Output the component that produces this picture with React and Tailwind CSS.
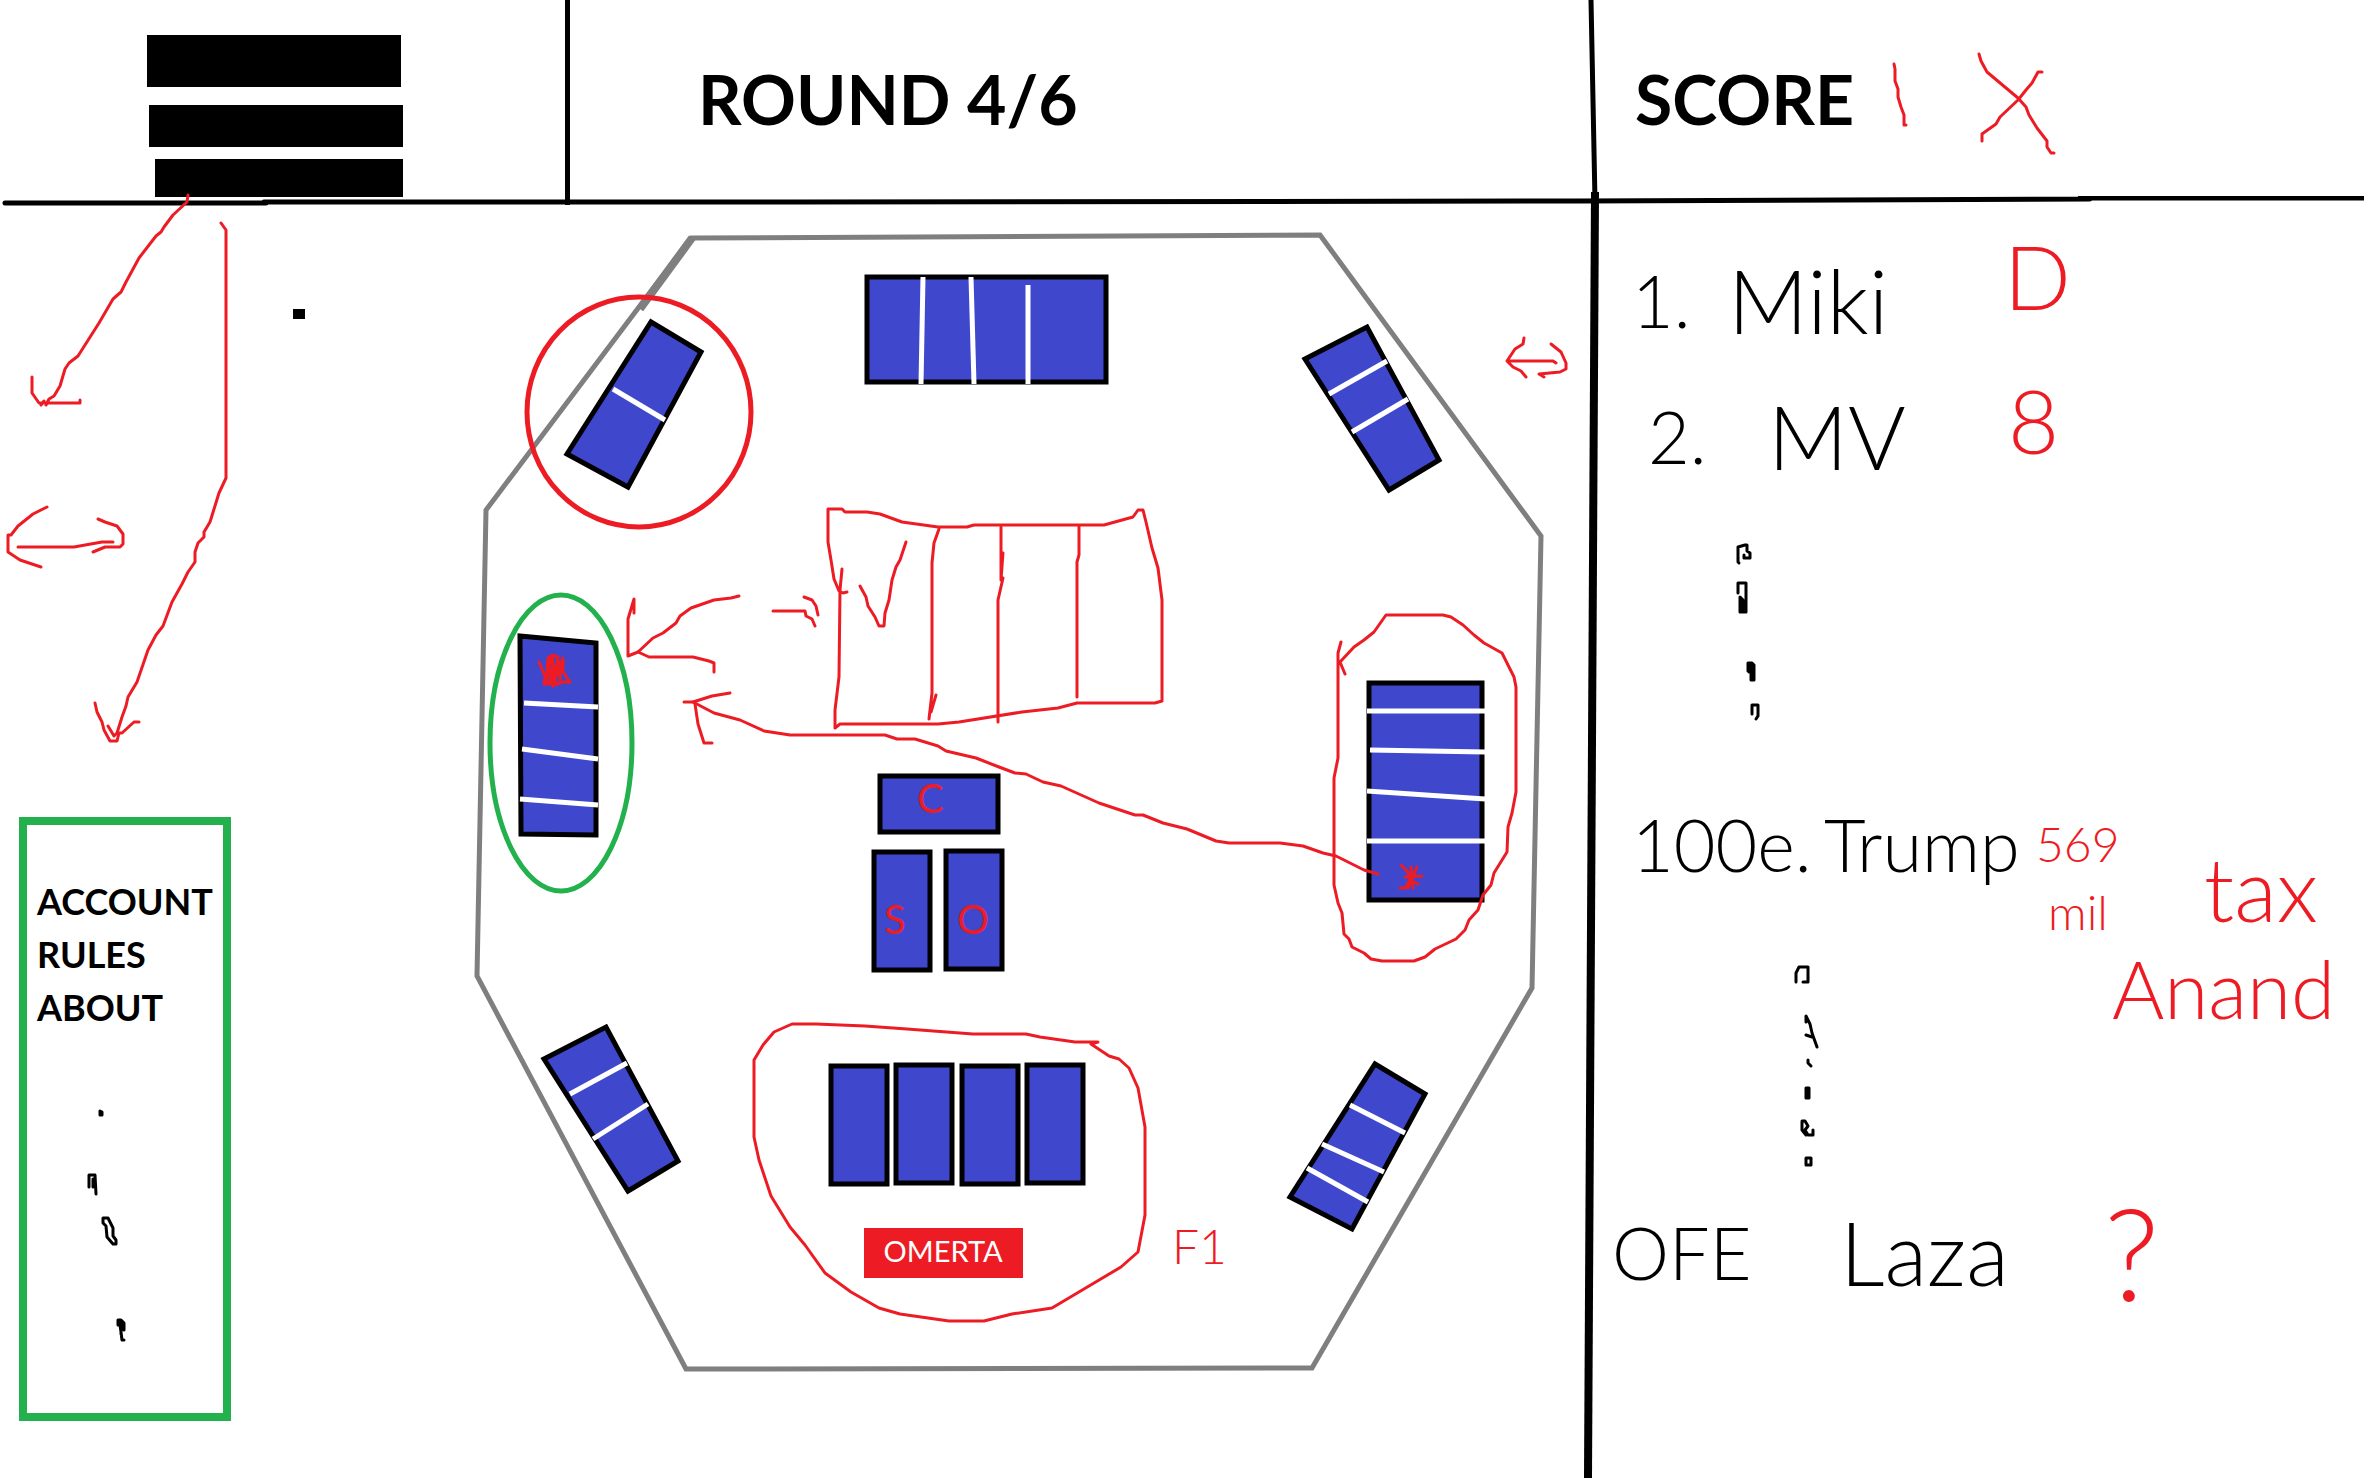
const RED = "#ed1c24";
const GREEN = "#22b14c";
const BLUE = "#3f48cc";
const GRAY = "#7f7f7f";

function Ink({ paths, color = RED, width = 3 }) {
  return (
    <g fill="none" stroke={color} strokeWidth={width} strokeLinecap="round" strokeLinejoin="round">
      {paths.map((d) => (
        <path key={d} d={d} />
      ))}
    </g>
  );
}

// Pointers that lead out of the menu and down the side column
const sideInk = [
  "M188 195L187 202L173 215L164 227L161 232L156 236L139 258L126 282L121 292L113 299L99 323L78 356L69 363L65 369L60 386L54 396L49 399L46 405",
  "M32 377V393L39 403H80V400M41 405L44 401",
  "M221 223L226 230V478L219 493L210 522L204 532V537L198 543L195 552V562L188 572L182 584L172 602L163 626L156 635L148 650L137 682L128 697L126 706L122 717L117 733L114 736L108 726",
  "M95 703L97 712L102 722L104 730L110 741H117L119 733L122 733L134 722H139",
  "M47 507L33 514L18 526L11 535H8V552L20 560L41 567",
  "M18 547H74L102 542H113",
  "M98 519L105 522L117 526L123 534V544L120 547H105L93 552",
];

const frameInk = "M691 238L1320 235L1541 536L1532 988L1312 1368L686 1369L477 976L486 510Z";

const tiltedCards = [
  "651,322 701,352 628,487 567,454",
  "1305,359 1367,327 1439,460 1389,490",
  "520,636 596,643 596,835 521,834",
  "544,1059 606,1027 678,1161 628,1191",
  "1375,1064 1425,1094 1352,1229 1290,1197",
];

const cards = [
  [865, 275, 243, 109],
  [1367, 681, 117, 221],
  [878, 774, 122, 60],
  [872, 850, 60, 122],
  [944, 849, 60, 122],
  [829, 1064, 60, 122],
  [894, 1063, 60, 122],
  [960, 1064, 60, 122],
  [1025, 1063, 60, 122],
];

const cardSplits = [
  "M613 389L665 420",
  "M923 277L921 384",
  "M971 277L974 384",
  "M1028 285V384",
  "M1329 394L1387 361",
  "M1352 432L1408 399",
  "M524 703L598 707",
  "M522 749L598 759",
  "M520 799L598 805",
  "M1367 711H1485",
  "M1370 750L1485 752",
  "M1367 791L1485 799",
  "M1367 841H1485",
  "M570 1094L627 1063",
  "M593 1139L648 1104",
  "M1350 1105L1405 1133",
  "M1322 1144L1384 1172",
  "M1307 1168L1368 1202",
];

const boardInk = [
  // loop round the player's own hand
  "M792 1024H816L865 1026L907 1029L973 1034H1026L1040 1037L1075 1042H1098L1091 1044L1109 1056L1119 1059L1129 1068L1138 1088L1145 1127V1215L1138 1252L1121 1267L1089 1286L1052 1308L1012 1314L984 1321H949L900 1314L879 1308L851 1292L825 1273L805 1245L790 1227L771 1196L759 1160L754 1137V1060L763 1045L774 1032Z",
  // long arrow from right hand to left hand
  "M684 702H693L714 713L740 720L764 731L790 735H885L897 739H915L938 746L946 751L976 758L999 767L1015 773L1026 774L1043 782L1061 786L1099 803L1135 815H1143L1163 823L1187 829L1216 841L1229 843H1280L1303 846L1323 853L1336 856L1364 870L1378 874",
  "M693 702L712 696L730 693M695 704L698 724L704 743H712",
  "M634 613V599L628 619V656L638 652L653 638L663 633L676 623L680 616L691 608L714 600L731 598L739 596",
  "M638 652L649 657H693L709 661L714 663V672",
  "M773 611H805L806 616L812 619L815 626M804 597L812 600L816 606L818 615",
  // sketched tray with its dividers and tick
  "M847 592L843 593L839 591L834 579L831 560L828 542V509H842L845 512H867L880 514L902 522L938 527H967L974 525H1104L1133 517L1138 510H1143L1146 522L1152 548L1158 568L1162 600V701L1155 703H1077L1058 708L1022 712L959 722L938 724H840L835 728V710L839 677L840 590L842 569",
  "M939 529L934 543L932 563V693L929 719M936 695L931 712",
  "M1001 527V580L1003 553M1003 578L998 600V722",
  "M1079 526V555L1077 562V697",
  "M860 586L866 597L868 606L875 617L879 626H884L885 613L889 600L892 580L896 567L900 560L906 542",
  // loop round the right hand
  "M1341 642L1338 653V758L1334 778V885L1338 903L1342 913L1344 934L1349 939L1352 947L1364 953L1371 959L1382 961H1414L1425 957L1435 949L1456 939L1465 930L1469 920L1478 910L1483 895L1491 885L1494 873L1507 852L1508 827L1512 813L1516 792V687L1514 677L1507 663L1502 653L1484 643L1474 635L1463 625L1451 617L1443 615H1386L1374 632L1364 640L1354 647L1340 662L1345 674",
  "M1401 865L1408 872L1410 880L1405 888H1400M1417 867L1408 888M1411 867L1413 888M1405 877L1422 876M1410 880L1418 884",
  "M539 662L545 676L544 684L553 655L548 658L546 684L556 684L552 655L558 657L554 685L563 682H570L563 672V658L557 675L551 684L544 682M550 660V682M560 662V680M553 668V686",
  "M1524 338L1523 344L1515 349L1507 361L1513 367L1521 371L1526 377M1508 361H1553L1556 363",
  "M1551 344L1561 352L1566 363V369L1560 372L1539 374L1544 377",
];

const rulesInk = [
  "M100 1111V1115H102V1112Z",
  "M89 1187V1175H95L96 1194M93 1179V1187",
  "M103 1223V1218H108L113 1228V1236L116 1240V1244H113L107 1237L106 1226Z",
  "M118 1325V1320H121L124 1323V1330L120 1325L121 1332L122 1340H124M121 1322V1334",
];

const upperDots = [
  "M1739 563L1738 562V547L1745 545H1747V551L1750 553V558H1744V555",
  "M1738 593V583H1746V612H1740V597L1743 600V610",
  "M1748 671V663H1752L1754 665V680H1751V665L1749 672",
  "M1752 714V705H1758V716L1756 719",
];

const lowerDots = [
  "M1796 982V973L1799 967H1808V982H1803",
  "M1806 1022V1016L1810 1024L1812 1033L1817 1047M1806 1035L1812 1037",
  "M1808 1060V1063L1811 1066",
  "M1806 1088H1809V1098H1806Z",
  "M1802 1121H1805L1808 1126L1805 1130L1808 1135H1813V1130M1802 1122V1130L1806 1135",
  "M1806 1158H1811V1165H1806Z",
];

function Hand({ className = "", children }) {
  return <span className={"block whitespace-nowrap leading-none " + className}>{children}</span>;
}

function Header() {
  return (
    <header>
      <div className="grid h-[196px] grid-cols-[565fr_5fr_1017fr_16fr_761fr]">
        <div className="pl-[147px] pt-[35px]">
          <button aria-label="Menu" className="flex flex-col items-start">
            <span className="h-[52px] w-[254px] bg-black" />
            <span className="ml-0.5 mt-[18px] h-[42px] w-[254px] bg-black" />
            <span className="ml-2 mt-3 h-[38px] w-[248px] bg-black" />
          </button>
        </div>
        <div className="-mb-2 bg-black" />
        <div className="flex items-center pl-[128px]">
          <h1 className="whitespace-nowrap text-[68px] font-bold leading-none">ROUND 4/6</h1>
        </div>
        <svg viewBox="0 0 16 196" preserveAspectRatio="none" className="h-full w-full overflow-visible">
          <path d="M4 0L8 200" stroke="#000" strokeWidth="5" />
        </svg>
        <div className="flex items-center pl-8">
          <h2 className="w-[245px] whitespace-nowrap text-[68px] font-bold leading-none">SCORE</h2>
          <svg viewBox="1880 44 190 116" className="mt-2 h-[116px] w-[190px]">
            <Ink
              paths={[
                "M1894 63L1895 68V80L1898 88V96L1901 106L1904 114V124H1906",
                "M1979 53L1981 60L1987 71L2018 97L2026 106L2029 114L2037 127L2047 140V146L2051 152H2054",
                "M2042 71H2038L2032 82L2026 89L2018 99L2000 116L1996 123L1982 133V140",
              ]}
            />
          </svg>
        </div>
      </div>
      <svg viewBox="0 0 2364 12" preserveAspectRatio="none" className="block h-3 w-full">
        <path d="M5 7H266M264 6H800M798 6L1580 5L2090 3M2080 2H2364" stroke="#000" strokeWidth="5" strokeLinecap="round" fill="none" />
      </svg>
    </header>
  );
}

function Side() {
  return (
    <aside>
      <svg viewBox="0 208 470 609" className="block h-auto w-full overflow-visible">
        <Ink paths={sideInk} />
        <rect x="293" y="309" width="12" height="10" />
      </svg>
      <section className="ml-[19px] w-[212px] border-8 border-[#22b14c] pt-[50px]">
        <h2 className="pl-[10px] text-[36px] font-bold leading-[53px]">
          ACCOUNT
          <br />
          RULES
          <br />
          ABOUT
        </h2>
        <svg viewBox="27 1034 196 379" className="block h-auto w-full">
          <Ink paths={rulesInk} color="#000" />
        </svg>
      </section>
    </aside>
  );
}

function Board() {
  return (
    <main className="relative">
      <svg viewBox="470 208 1112 1276" className="block h-auto w-full overflow-visible">
        <g fill="none" stroke={GRAY} strokeWidth="5">
          <path d={frameInk} />
          <path d="M692 238L640 309" strokeWidth="8" />
        </g>
        <g fill={BLUE} stroke="#000" strokeWidth="5">
          {tiltedCards.map((points) => (
            <polygon key={points} points={points} />
          ))}
          {cards.map(([x, y, w, h]) => (
            <rect key={x + "-" + y} x={x + 2} y={y + 2} width={w - 4} height={h - 4} />
          ))}
        </g>
        <g stroke="#fff" strokeWidth="5">
          {cardSplits.map((d) => (
            <path key={d} d={d} />
          ))}
        </g>
        <ellipse cx="639" cy="412" rx="112" ry="115" fill="none" stroke={RED} strokeWidth="5" />
        <ellipse cx="561" cy="743" rx="71" ry="148" fill="none" stroke={GREEN} strokeWidth="5" />
        <Ink paths={boardInk} />
        <g fill={RED} fontSize="40" fontWeight="400">
          <text x="917" y="813">C</text>
          <text x="884" y="934">S</text>
          <text x="957" y="934">O</text>
          <text x="1172" y="1264" fontSize="48" fontWeight="300">F1</text>
        </g>
      </svg>
      <button className="absolute left-[35.4%] top-[80%] -mt-px h-[50px] w-[159px] bg-[#ed1c24] pb-1 text-[29px] leading-none text-white">
        OMERTA
      </button>
    </main>
  );
}

function Scores() {
  return (
    <ol className="relative pt-6 text-[72px] font-light leading-none text-black">
      <li className="flex h-[136px] items-center pl-7">
        <Hand className="w-24">1.</Hand>
        <Hand className="w-[276px] text-[88px]">Miki</Hand>
        <Hand className="mb-12 text-[88px] text-[#ed1c24]">D</Hand>
      </li>
      <li className="flex h-[136px] items-center pl-11">
        <Hand className="w-[120px]">2.</Hand>
        <Hand className="w-60 text-[88px]">MV</Hand>
        <Hand className="mb-8 text-[88px] text-[#ed1c24]">8</Hand>
      </li>
      <li className="h-[272px]" aria-hidden="true">
        <svg viewBox="1604 504 400 272" className="h-full w-[400px]">
          <Ink paths={upperDots} color="#000" />
        </svg>
      </li>
      <li className="flex h-[136px] items-center pl-7">
        <Hand className="w-[192px]">100e.</Hand>
        <Hand className="w-[212px]">Trump</Hand>
        <Hand className="text-[48px] text-[#ed1c24]">569</Hand>
      </li>
      <li className="h-[272px]" aria-hidden="true">
        <svg viewBox="1604 912 400 272" className="h-full w-[400px]">
          <Ink paths={lowerDots} color="#000" />
        </svg>
      </li>
      <li className="flex h-[136px] items-center pl-2">
        <Hand className="w-[228px]">OFE</Hand>
        <Hand className="w-[264px] text-[88px]">Laza</Hand>
        <Hand className="text-[128px] text-[#ed1c24]">?</Hand>
      </li>
      <li className="absolute left-[444px] top-[680px] text-[#ed1c24]">
        <Hand className="text-[48px]">mil</Hand>
      </li>
      <li className="absolute left-[600px] top-[636px] text-[#ed1c24]">
        <Hand className="text-[88px]">tax</Hand>
      </li>
      <li className="absolute left-[508px] top-[740px] text-[#ed1c24]">
        <Hand className="text-[80px]">Anand</Hand>
      </li>
    </ol>
  );
}

export default function App() {
  return (
    <div className="min-h-screen overflow-hidden bg-white font-['Lato',sans-serif] text-black">
      <Header />
      <div className="grid grid-cols-[470fr_1112fr_22fr_760fr]">
        <Side />
        <Board />
        <svg viewBox="0 0 22 1276" preserveAspectRatio="none" className="h-full w-full overflow-visible">
          <path d="M13 -16L6 1270" stroke="#000" strokeWidth="8" />
        </svg>
        <Scores />
      </div>
    </div>
  );
}
